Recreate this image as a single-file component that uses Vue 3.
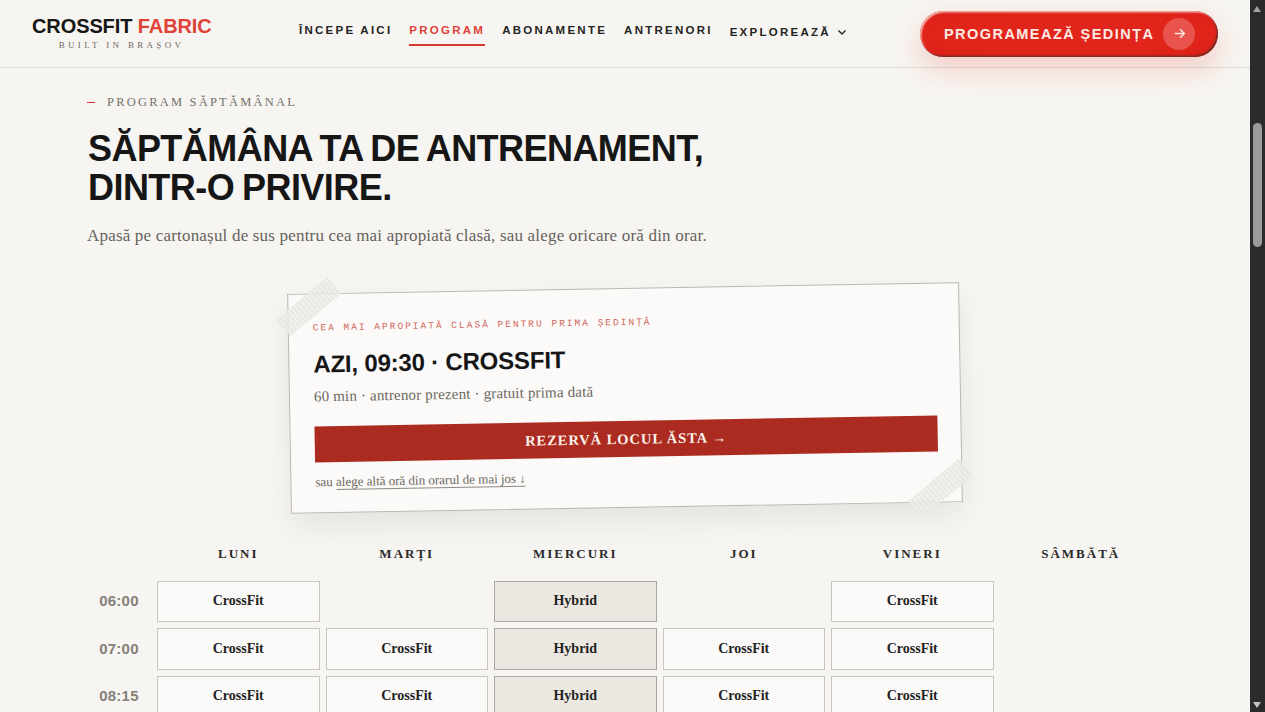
<template>
  <div class="shell">
    <div class="page">
      <header class="topbar">
        <div class="brand">
          <div class="brand-name">CROSSFIT <span class="red">FABRIC</span></div>
          <div class="brand-sub">BUILT IN BRAȘOV</div>
        </div>
        <nav class="nav">
          <a class="nav-link">ÎNCEPE AICI</a>
          <a class="nav-link active">PROGRAM</a>
          <a class="nav-link">ABONAMENTE</a>
          <a class="nav-link">ANTRENORI</a>
          <a class="nav-link explore">
            EXPLOREAZĂ
            <svg width="12" height="12" viewBox="0 0 12 12" fill="none">
              <path d="M2.500 4.500 6 8l3.500-3.500" stroke="#2a2a2a" stroke-width="1.500" />
            </svg>
          </a>
        </nav>
        <button class="cta">
          <span>PROGRAMEAZĂ ȘEDINȚA</span>
          <span class="cta-icon">
            <svg width="15" height="15" viewBox="0 0 14 14" fill="none">
              <path d="M2.500 7h9M7.500 3l4 4-4 4" stroke="#fbe3df" stroke-width="1.500" />
            </svg>
          </span>
        </button>
      </header>

      <main class="content">
        <div class="eyebrow"><span class="dash"></span>PROGRAM SĂPTĂMÂNAL</div>
        <h1 class="title">SĂPTĂMÂNA TA DE ANTRENAMENT,<br />DINTR-O PRIVIRE.</h1>
        <p class="lead">Apasă pe cartonașul de sus pentru cea mai apropiată clasă, sau alege oricare oră din orar.</p>

        <section class="ticket">
          <span class="tape tape-a"></span>
          <span class="tape tape-b"></span>
          <div class="ticket-label">CEA MAI APROPIATĂ CLASĂ PENTRU PRIMA ȘEDINȚĂ</div>
          <h2 class="ticket-title">AZI, 09:30 · CROSSFIT</h2>
          <p class="ticket-meta">60 min · antrenor prezent · gratuit prima dată</p>
          <a class="ticket-btn">REZERVĂ LOCUL ĂSTA →</a>
          <p class="ticket-alt">sau <a>alege altă oră din orarul de mai jos ↓</a></p>
        </section>

        <div class="schedule">
          <div></div>
          <div v-for="d in days" :key="d" class="day">{{ d }}</div>
          <template v-for="row in rows" :key="row.time">
            <div class="time">{{ row.time }}</div>
            <template v-for="(c, i) in row.cells" :key="i">
              <div v-if="c" class="slot" :class="{ hybrid: c === 'Hybrid' }">{{ c }}</div>
              <div v-else></div>
            </template>
          </template>
        </div>
      </main>
    </div>

    <aside class="scrollbar">
      <span class="arrow up"></span>
      <span class="thumb"></span>
      <span class="arrow down"></span>
    </aside>
  </div>
</template>

<script setup>
const days = ['LUNI', 'MARȚI', 'MIERCURI', 'JOI', 'VINERI', 'SÂMBĂTĂ']

const rows = [
  { time: '06:00', cells: ['CrossFit', '', 'Hybrid', '', 'CrossFit', ''] },
  { time: '07:00', cells: ['CrossFit', 'CrossFit', 'Hybrid', 'CrossFit', 'CrossFit', ''] },
  { time: '08:15', cells: ['CrossFit', 'CrossFit', 'Hybrid', 'CrossFit', 'CrossFit', ''] }
]
</script>

<style>
html, body { margin: 0; height: 100%; overflow: hidden; background: #f7f5f1; }
</style>

<style scoped>
.shell {
  display: flex;
  height: 712px;
  overflow: hidden;
  background: #f7f5f1;
  color: #161616;
  font-family: "Liberation Sans", Arial, sans-serif;
}
.page { flex: 1; min-width: 0; overflow: hidden; }

.topbar {
  position: relative;
  z-index: 2;
  display: flex;
  align-items: center;
  box-sizing: border-box;
  height: 68px;
  padding: 0 32px;
  border-bottom: 1px solid #dcdad6;
}
.brand { width: 179px; text-align: center; margin-top: -1px; }
.brand-name { font-size: 20px; font-weight: 700; line-height: 21px; letter-spacing: -0.100px; white-space: nowrap; }
.red { color: #e04238; }
.brand-sub {
  margin-top: 3px;
  font-family: "Liberation Serif", serif;
  font-size: 9px;
  line-height: 11px;
  letter-spacing: 3.300px;
  color: #6e6a64;
}
.nav { display: flex; align-items: center; gap: 17px; margin-left: 88px; }
.nav-link {
  position: relative;
  font-size: 11.500px;
  font-weight: 700;
  letter-spacing: 2.250px;
  line-height: 14px;
  padding: 5px 0 9px;
  margin-top: -3px;
  color: #232323;
  white-space: nowrap;
}
.nav-link.active { color: #e04238; }
.nav-link.active::after {
  content: "";
  position: absolute;
  left: 0;
  right: 0;
  bottom: 0;
  height: 2px;
  background: #d9392e;
}
.explore { display: flex; align-items: center; gap: 5px; margin-top: 1px; }
.cta {
  display: flex;
  align-items: center;
  justify-content: space-between;
  box-sizing: border-box;
  width: 298px;
  height: 46px;
  margin-left: auto;
  padding: 0 23px 0 24px;
  border: 0;
  border-radius: 23px;
  background: radial-gradient(ellipse at center, #e2251b 60%, #dc1f16);
  box-shadow:
    inset -1.500px -1.500px 1.500px #7a2b27,
    inset 1.500px 1.500px 1.500px #f3b4ad,
    0 12px 28px rgba(226, 40, 30, 0.2);
  color: #fbeae4;
  font-family: "Liberation Sans", Arial, sans-serif;
  font-size: 14.500px;
  font-weight: 700;
  letter-spacing: 1.450px;
}
.cta-icon {
  display: flex;
  align-items: center;
  justify-content: center;
  width: 32px;
  height: 32px;
  border-radius: 50%;
  background: rgba(255, 255, 255, 0.22);
}

.content { padding: 0 88px 0 87px; }
.eyebrow {
  display: flex;
  align-items: center;
  margin-top: 27px;
  font-family: "Liberation Serif", serif;
  font-size: 12.500px;
  line-height: 15px;
  letter-spacing: 2.200px;
  color: #74706a;
}
.dash { width: 8px; height: 1px; margin-right: 12px; background: #c0392b; }
.title {
  margin: 19px 0 0;
  padding-left: 1px;
  font-size: 36px;
  line-height: 39px;
  font-weight: 700;
  letter-spacing: -0.550px;
  word-spacing: -1.600px;
}
.lead {
  margin: 17px 0 0;
  font-family: "Liberation Serif", serif;
  font-size: 17px;
  line-height: 24px;
  letter-spacing: 0.190px;
  color: #66625c;
}

.ticket {
  position: relative;
  box-sizing: border-box;
  width: 672px;
  height: 220px;
  margin: 40px auto 0;
  padding: 28px 23px 0 24px;
  transform: rotate(-1deg);
  background: #fbfaf8;
  border: 1px solid #b9b6b1;
  box-shadow: 0 14px 30px rgba(0, 0, 0, 0.07);
}
.tape {
  position: absolute;
  width: 67px;
  height: 22px;
  transform: rotate(-39deg);
  background: repeating-linear-gradient(90deg, #e7e5e0 0 2px, #efeeea 2px 4px);
  opacity: 0.85;
}
.tape-a { left: -13px; top: 1px; }
.tape-b { right: -12px; bottom: 2px; }
.ticket-label {
  font-family: "Liberation Mono", monospace;
  font-size: 9.500px;
  line-height: 12px;
  letter-spacing: 2px;
  color: #d2655c;
}
.ticket-title {
  margin: 15px 0 0;
  font-size: 24px;
  line-height: 30px;
  font-weight: 700;
  letter-spacing: -0.200px;
}
.ticket-meta {
  margin: 7px 0 0;
  font-family: "Liberation Serif", serif;
  font-size: 15px;
  line-height: 20px;
  letter-spacing: 0.170px;
  color: #6b6761;
}
.ticket-btn {
  display: block;
  margin-top: 20px;
  height: 36px;
  line-height: 36px;
  text-align: center;
  background: #ab2b20;
  color: #fbf2ec;
  font-family: "Liberation Serif", serif;
  font-size: 14.500px;
  font-weight: 700;
  letter-spacing: 0.950px;
}
.ticket-alt {
  margin: 11px 0 0;
  font-family: "Liberation Serif", serif;
  font-size: 13px;
  line-height: 18px;
  color: #6b6761;
}
.ticket-alt a { border-bottom: 1.500px solid #8d8983; }

.schedule {
  display: grid;
  grid-template-columns: 64px repeat(6, 1fr);
  grid-auto-rows: 41.500px;
  gap: 6px;
  margin-top: 25px;
}
.day {
  align-self: center;
  text-align: center;
  font-family: "Liberation Serif", serif;
  font-size: 13px;
  font-weight: 700;
  letter-spacing: 2px;
  color: #2a2a2a;
}
.time {
  display: flex;
  align-items: center;
  justify-content: center;
  padding-bottom: 1px;
  font-size: 15px;
  font-weight: 700;
  letter-spacing: 0.250px;
  color: #85817a;
}
.slot {
  display: flex;
  align-items: center;
  justify-content: center;
  box-sizing: border-box;
  background: #fbfaf8;
  border: 1px solid #c8c5c0;
  font-family: "Liberation Serif", serif;
  font-size: 14px;
  font-weight: 700;
  color: #222;
}
.slot.hybrid { background: #ebe8e1; border-color: #a9a6a0; }

.scrollbar {
  position: relative;
  flex: 0 0 15px;
  background: #2b2b2b;
}
.thumb {
  position: absolute;
  left: 3px;
  top: 123px;
  width: 9px;
  height: 124px;
  border-radius: 5px;
  background: #9b9b9b;
}
.arrow {
  position: absolute;
  left: 3px;
  width: 0;
  height: 0;
  border-left: 4.500px solid transparent;
  border-right: 4.500px solid transparent;
}
.arrow.up { top: 6px; border-bottom: 6px solid #a3a3a3; }
.arrow.down { bottom: 4px; border-top: 6px solid #c4c4c4; }
</style>
